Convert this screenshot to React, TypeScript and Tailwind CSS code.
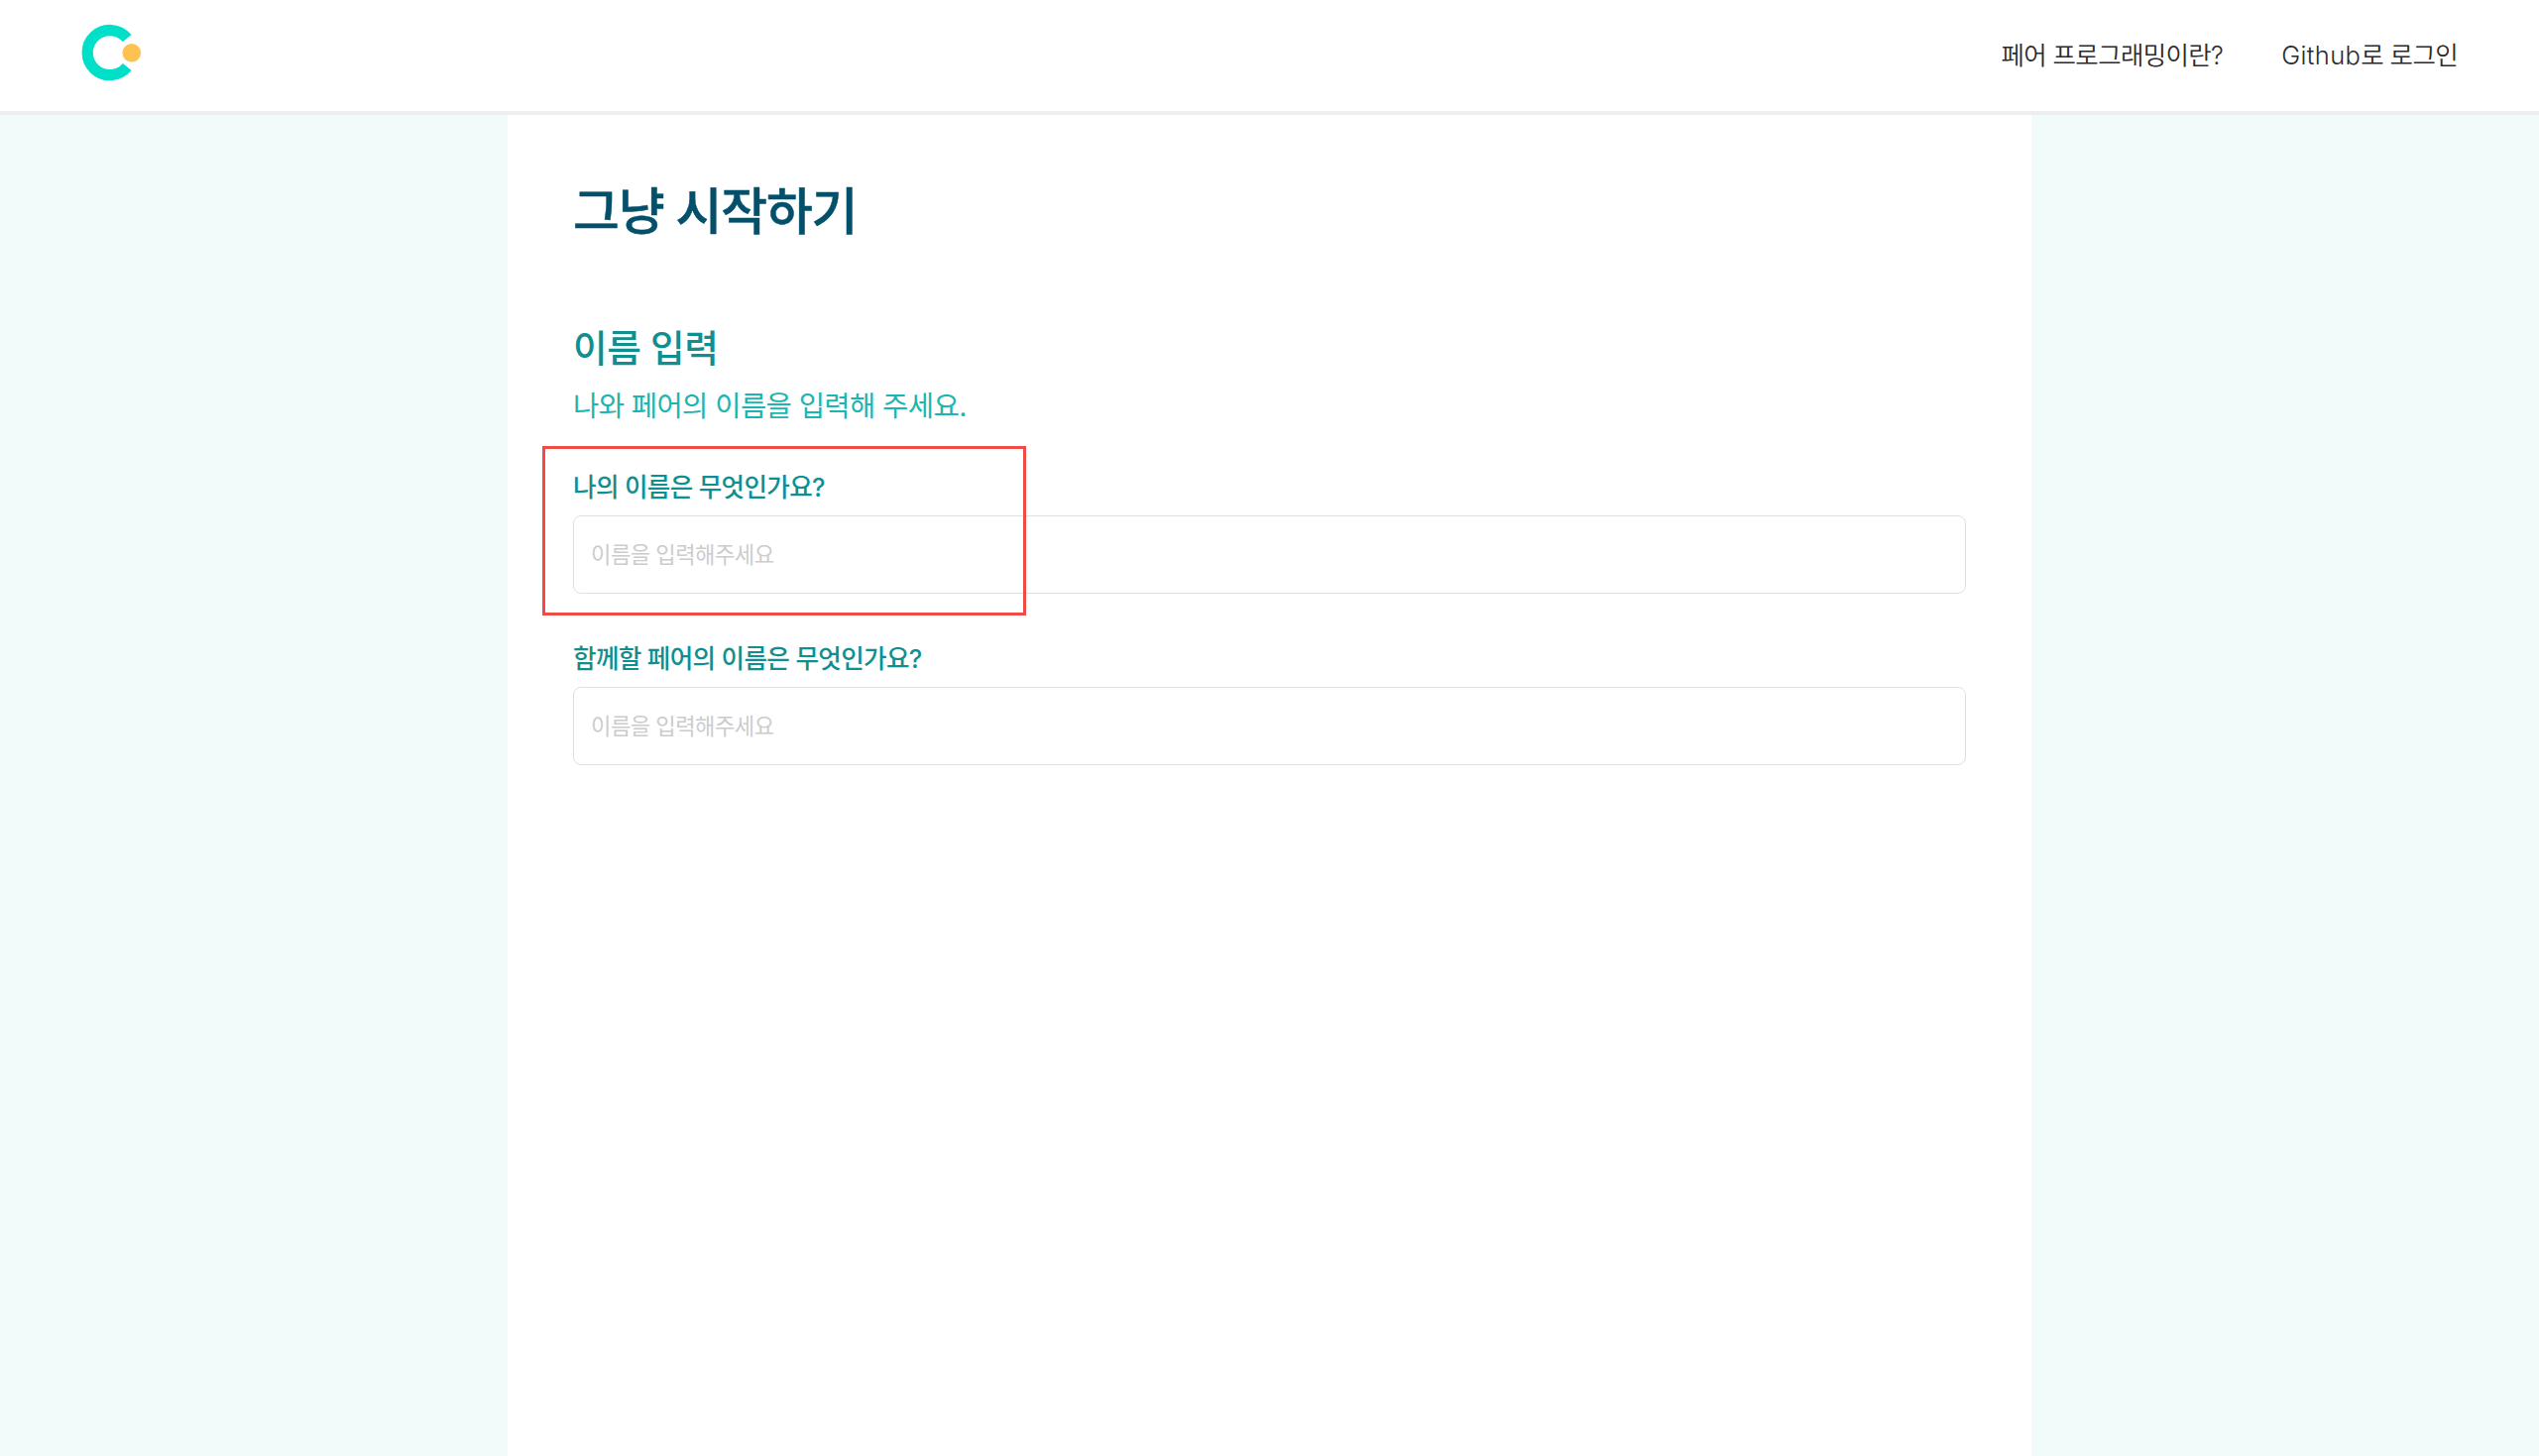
import React from 'react';

function Logo() {
  return (
    <svg className="-mt-1" width="62" height="60" viewBox="0 0 62 60" role="img" aria-label="Coduo">
      <path
        d="M46.2 14.7 A22.6 22.6 0 1 0 46.2 43.5"
        fill="none"
        stroke="#00DFC8"
        strokeWidth="11.3"
      />
      <circle cx="50.8" cy="29.3" r="9.3" fill="#FFC252" />
    </svg>
  );
}

function Field({ id, label, marked = false }: { id: string; label: string; marked?: boolean }) {
  return (
    <div className="relative flex flex-col">
      <label
        htmlFor={id}
        className="h-[38px] text-[25.6px] leading-[39px] font-medium tracking-[-0.026em] text-[#0f8f92]"
      >
        {label}
      </label>
      <input
        id={id}
        placeholder="이름을 입력해주세요"
        className="mt-[10px] h-[79px] w-full rounded-[8px] border border-[#e0e0e0] bg-white px-[17px] text-[22.2px] tracking-[-0.024em] outline-none placeholder:text-[#cccccc]"
      />
      {marked && (
        <div className="pointer-events-none absolute -top-[22px] -left-[31px] h-[171px] w-[488px] border-[3px] border-[#f04a44]" />
      )}
    </div>
  );
}

export default function App() {
  return (
    <div
      lang="ko"
      className="flex h-[1469px] flex-col overflow-hidden bg-[#f1fbfa] font-['Inter','Noto_Sans_CJK_KR',sans-serif]"
    >
      <header className="flex h-[116px] shrink-0 items-center justify-between border-b-4 border-[#eeeeee] bg-white pr-[82px] pl-[82px]">
        <Logo />
        <nav className="flex gap-[59px] text-[25.5px] leading-[36px] font-[350] tracking-[-0.026em] text-[#2b2b2b]">
          <a>페어 프로그래밍이란?</a>
          <a>
            <span className="tracking-[0.014em]">Github</span>로 로그인
          </a>
        </nav>
      </header>
      <main className="mx-auto flex w-[1537px] grow flex-col bg-white px-[66px] pt-[58px]">
        <h1 className="h-[78px] text-[51px] leading-[80px] font-medium tracking-[-0.025em] text-[#04506b] [-webkit-text-stroke:0.5px_#04506b]">
          그냥 시작하기
        </h1>
        <h2 className="mt-[70px] h-[58px] text-[37.7px] leading-[58px] font-medium tracking-[-0.012em] text-[#0f8f92]">
          이름 입력
        </h2>
        <p className="mt-[8px] h-[44px] text-[28.6px] leading-[44px] tracking-[-0.022em] text-[#1cb5b0]">
          나와 페어의 이름을 입력해 주세요.
        </p>
        <form className="mt-[40px] flex flex-col gap-[46px]">
          <Field id="my-name" label="나의 이름은 무엇인가요?" marked />
          <Field id="pair-name" label="함께할 페어의 이름은 무엇인가요?" />
        </form>
      </main>
    </div>
  );
}
